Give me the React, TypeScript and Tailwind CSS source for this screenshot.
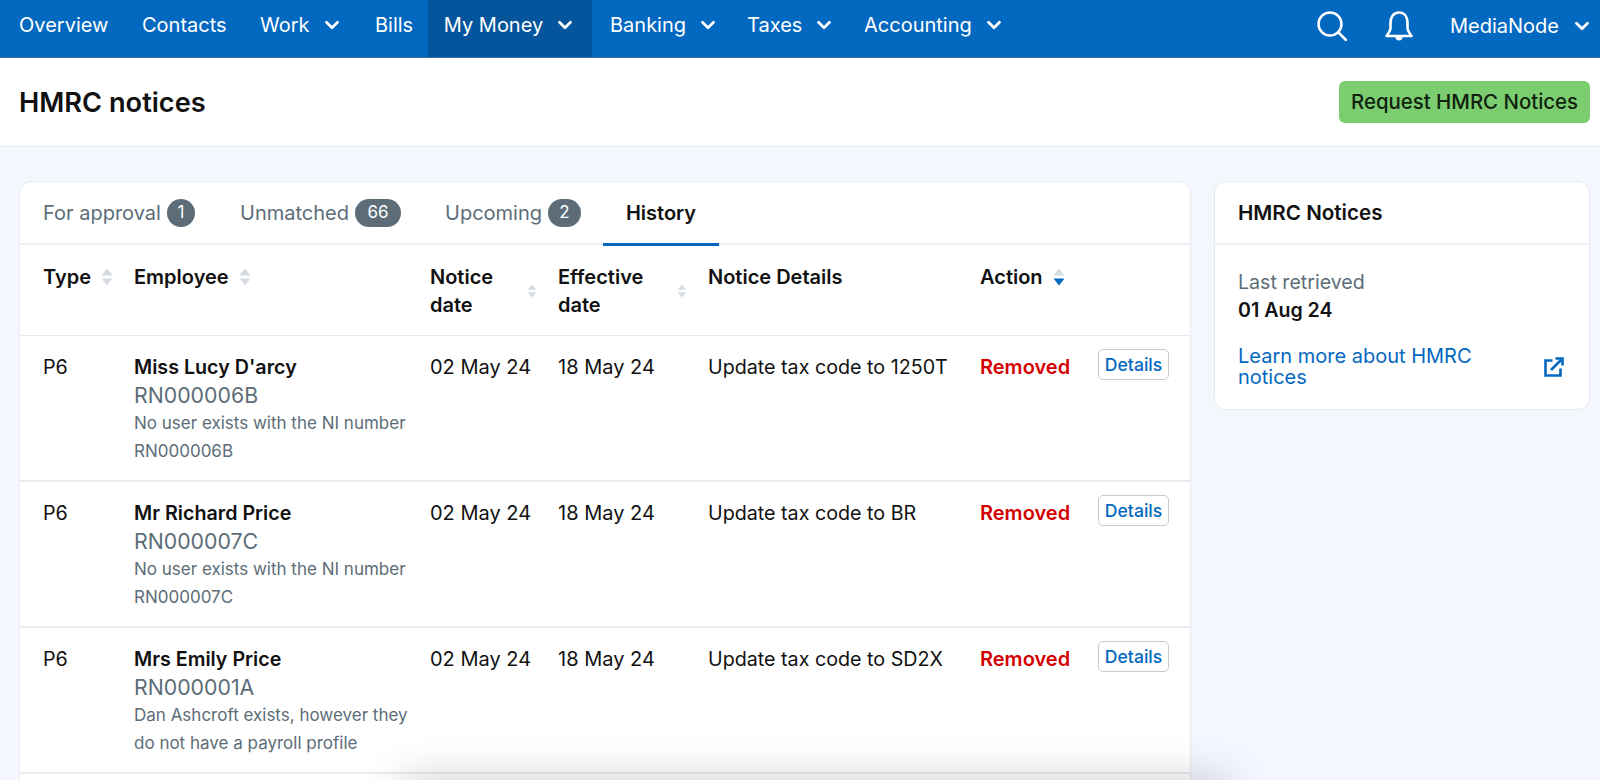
import { ChevronDown } from "lucide-react";

const navItems = [
  { label: "Overview", w: "w-[123px]" },
  { label: "Contacts", w: "w-[118px]" },
  { label: "Work", caret: true, w: "w-[115px]" },
  { label: "Bills", w: "w-[53px]" },
  { label: "My Money", caret: true, active: true, w: "w-[164px]" },
  { label: "Banking", caret: true, w: "w-[137px] ml-[18px]" },
  { label: "Taxes", caret: true, w: "w-[117px]" },
  { label: "Accounting", caret: true, w: "w-[180px]" },
];

const tabs = [
  { label: "For approval", count: "1", w: "w-[197px]", badge: "w-[28px]" },
  { label: "Unmatched", count: "66", w: "w-[205px]", badge: "w-[46px]" },
  { label: "Upcoming", count: "2", w: "w-[181px]", badge: "w-[33px]" },
];

const rows = [
  {
    name: "Miss Lucy D'arcy",
    ni: "RN000006B",
    note: "No user exists with the NI number RN000006B",
    details: "Update tax code to 1250T",
  },
  {
    name: "Mr Richard Price",
    ni: "RN000007C",
    note: "No user exists with the NI number RN000007C",
    details: "Update tax code to BR",
  },
  {
    name: "Mrs Emily Price",
    ni: "RN000001A",
    note: "Dan Ashcroft exists, however they do not have a payroll profile",
    details: "Update tax code to SD2X",
  },
];

const columns = "grid grid-cols-[91px_296px_128px_150px_272px_118px_1fr]";

function SortIcon({ small, active }: { small?: boolean; active?: boolean }) {
  return (
    <svg viewBox="0 0 12 18" className={small ? "h-[14px] w-[10px] shrink-0" : "h-[18px] w-[12px] shrink-0"}>
      <path d="M6 0.5 L11.5 7.5 H0.5 Z" fill="#d5dbe0" />
      <path d="M6 17.5 L11.5 10.5 H0.5 Z" fill={active ? "#0368c0" : "#d5dbe0"} />
    </svg>
  );
}

function SearchIcon() {
  return (
    <svg viewBox="0 0 30 30" fill="none" stroke="white" strokeWidth="2.5" strokeLinecap="round" className="mr-[38px] h-[30px] w-[30px]">
      <circle cx="13" cy="13" r="11.5" />
      <path d="M21.5 21.5 L29 29" />
    </svg>
  );
}

function BellIcon() {
  return (
    <svg viewBox="0 0 28 31" className="mr-[37px] h-[31px] w-[28px]">
      <path
        d="M14 2.5 C8 2.5 5.5 7.5 5.5 13 V18 C5.5 22 3 23.5 1.5 26 H26.5 C25 23.5 22.5 22 22.5 18 V13 C22.5 7.5 20 2.5 14 2.5 Z"
        fill="none"
        stroke="white"
        strokeWidth="2.6"
        strokeLinejoin="round"
      />
      <path d="M10.5 27 a3.5 3.5 0 0 0 7 0 Z" fill="white" />
    </svg>
  );
}

function ExternalIcon() {
  return (
    <svg viewBox="0 0 20 20" fill="none" stroke="#0368c0" strokeWidth="2.6" className="mr-[2px] h-[20px] w-[20px] shrink-0">
      <path d="M8.5 3.5 H1.5 V18.5 H16.5 V11.5" />
      <path d="M7 13 L17.5 2.5" />
      <path d="M11.5 1.5 H18.5 V8.5" />
    </svg>
  );
}

export default function App() {
  return (
    <div className="relative flex h-[780px] flex-col overflow-hidden bg-[#f4f7fe] font-['Inter',sans-serif] text-[#111]">
      {/* Top nav */}
      <nav className="flex h-[58px] shrink-0 items-stretch border-b border-[#3c6ea3] bg-[#0368c0] pl-[19px] pr-[7px] text-[20px] text-white">
        {navItems.map((item) => (
          <a
            key={item.label}
            className={
              item.active
                ? `flex items-center justify-center gap-[11px] bg-[#04559c] pb-[7px] ${item.w}`
                : `flex items-center gap-[11px] pb-[7px] ${item.w}`
            }
          >
            {item.label}
            {item.caret && <ChevronDown size={22} strokeWidth={3} />}
          </a>
        ))}
        <div className="ml-auto flex items-center pb-[6px]">
          <SearchIcon />
          <BellIcon />
          <span>MediaNode</span>
          <ChevronDown size={22} strokeWidth={3} className="ml-[12px]" />
        </div>
      </nav>

      {/* Page title */}
      <header className="flex h-[89px] shrink-0 items-center justify-between border-b border-[#e3e7ee] bg-white pl-[19px] pr-[10px]">
        <h1 className="pt-[3px] text-[27.2px] font-semibold">HMRC notices</h1>
        <button className="h-[42px] w-[251px] rounded-[6px] bg-[#7bcd70] text-[20.4px] font-medium text-[#10210e]">
          Request HMRC Notices
        </button>
      </header>

      <main className="flex items-start gap-[23px] pl-[19px] pr-[10px] pt-[34px]">
        {/* Notices table */}
        <section className="w-[1172px] shrink-0 rounded-t-[12px] border border-[#e6e9ef] bg-white">
          <div className="flex h-[63px] border-b-2 border-[#eceff3] pl-[23px] text-[20px] text-[#5c6d78]">
            {tabs.map((t) => (
              <div key={t.label} className={`flex items-center gap-[6px] ${t.w}`}>
                {t.label}
                <span className={`flex h-[28px] items-center justify-center rounded-full bg-[#5c6d78] text-[17px] text-white ${t.badge}`}>
                  {t.count}
                </span>
              </div>
            ))}
            <div className="-ml-[23px] -mb-[2px] flex h-[64px] w-[116px] items-center justify-center border-b-[3px] border-[#0368c0] font-semibold text-[#111]">
              History
            </div>
          </div>

          <div className={`${columns} h-[91px] border-b border-[#e6e9ef] pl-[23px] pt-[18px] text-[20px] leading-[28px] font-semibold`}>
            <div className="flex items-center gap-[10px] self-start">
              Type <SortIcon />
            </div>
            <div className="flex items-center gap-[10px] self-start">
              Employee <SortIcon />
            </div>
            <div className="flex w-[107px] items-center justify-between self-start">
              <span>
                Notice
                <br />
                date
              </span>
              <SortIcon small />
            </div>
            <div className="flex w-[129px] items-center justify-between self-start">
              <span>
                Effective
                <br />
                date
              </span>
              <SortIcon small />
            </div>
            <div>Notice Details</div>
            <div className="col-span-2 flex items-center gap-[10px] self-start">
              Action <SortIcon active />
            </div>
          </div>

          {rows.map((r) => (
            <div
              key={r.ni}
              className={`${columns} h-[146px] border-b-2 border-[#e8ebf0] pl-[23px] pt-[17px] text-[19.7px] leading-[28px]`}
            >
              <div>P6</div>
              <div>
                <div className="font-semibold">{r.name}</div>
                <div className="text-[21.3px] text-[#5c6d78]">{r.ni}</div>
                <div className="w-[285px] text-[17px] text-[#5c6d78]">{r.note}</div>
              </div>
              <div className="text-[20px]">02 May 24</div>
              <div className="text-[20px]">18 May 24</div>
              <div>{r.details}</div>
              <div className="text-[20px] font-semibold text-[#d40000]">Removed</div>
              <div>
                <button className="-mt-[4px] block h-[31px] w-[71px] rounded-[5px] border border-[#c3ccd3] text-[17.6px] leading-none font-medium text-[#0368c0]">
                  Details
                </button>
              </div>
            </div>
          ))}
          {/* next row, cut off by the fold */}
          <div className="h-[40px]" />
        </section>

        {/* Sidebar */}
        <aside className="flex-1 rounded-[12px] border border-[#e6e9ef] bg-white">
          <div className="flex h-[63px] items-center border-b-2 border-[#eceff3] px-[23px] pt-[2px] text-[20.6px] font-semibold">
            HMRC Notices
          </div>
          <div className="px-[23px] pt-[23px] pb-[21px]">
            <div className="text-[19.6px] leading-[28px] text-[#5c6d78]">Last retrieved</div>
            <div className="text-[19.6px] leading-[28px] font-semibold">01 Aug 24</div>
            <a className="mt-[22px] flex items-center justify-between text-[20px] leading-[21px] text-[#0368c0]">
              <span className="w-[250px]">Learn more about HMRC notices</span>
              <ExternalIcon />
            </a>
          </div>
        </aside>
      </main>

      {/* Sticky footer sitting just below the fold, only its shadow shows */}
      <div className="absolute top-[780px] right-[370px] left-[400px] h-[40px] shadow-[0_0_45px_rgba(0,0,0,0.2)]" />
    </div>
  );
}
